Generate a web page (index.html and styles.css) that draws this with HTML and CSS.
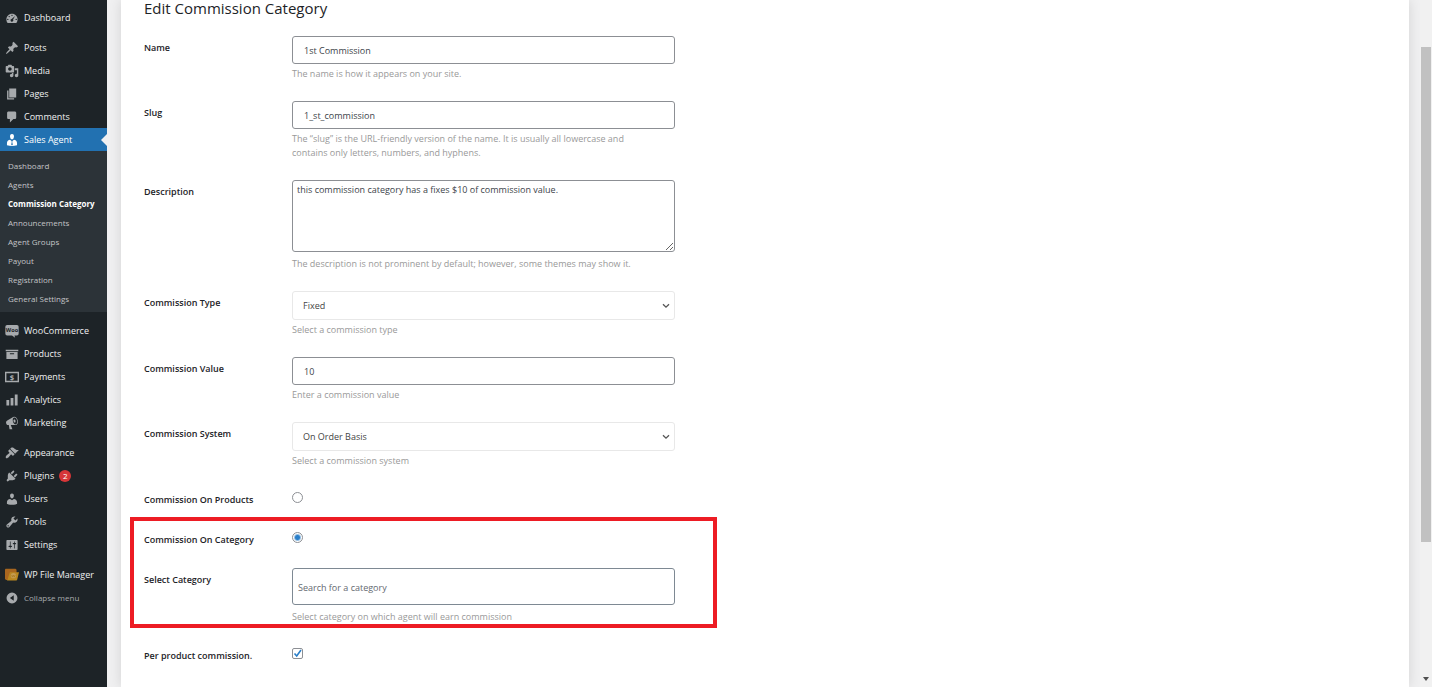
FILE: index.html
```html
<!DOCTYPE html>
<html lang="en-US">

<head>
    <meta charset="UTF-8">
    <meta name="viewport" content="width=device-width, initial-scale=1.0">
    <title>Edit Commission Category</title>
    <link rel="stylesheet" href="styles.css">
</head>

<body>
    <div class="wrap">
        <!-- Admin menu -->
        <nav class="admin-menu">
            <ul class="menu">
                <li><a href="#"><svg class="icon" viewBox="0 0 20 20"><path fill-rule="evenodd" d="M3.76 17h12.48A7.94 7.94 0 0 0 18 12c0-4.41-3.58-8-8-8s-8 3.59-8 8c0 1.91.67 3.65 1.76 5zM10 5.2a1 1 0 1 1 0 2 1 1 0 0 1 0-2zM6 7a1 1 0 1 1 0 2 1 1 0 0 1 0-2zm8.400 0L11.600 12.200A2 2 0 1 1 9.500 11.300zM4 11a1 1 0 1 1 0 2 1 1 0 0 1 0-2zm12 0a1 1 0 1 1 0 2 1 1 0 0 1 0-2z"/></svg>Dashboard</a></li>
            </ul>
            <ul class="menu">
                <li><a href="#"><svg class="icon" viewBox="0 0 20 20"><path d="M10.440 3.020l1.820-1.820 6.360 6.350-1.830 1.820c-1.050-.68-2.480-.57-3.410.36l-.75.75c-.92.93-1.040 2.350-.35 3.410l-1.830 1.820-2.410-2.410-2.800 2.790c-.42.42-3.380 2.710-3.800 2.290s1.860-3.390 2.280-3.810l2.790-2.790L4.100 9.360l1.830-1.820c1.050.69 2.480.57 3.400-.36l.75-.75c.93-.92 1.050-2.350.36-3.410z"/></svg>Posts</a></li>
                <li><a href="#"><svg class="icon" viewBox="0 0 20 20"><path fill-rule="evenodd" d="M13 11V4c0-.55-.45-1-1-1h-1.670L9 1H5L3.670 3H2c-.55 0-1 .45-1 1v7c0 .55.45 1 1 1h10c.55 0 1-.45 1-1zM7 4.500c1.380 0 2.500 1.120 2.500 2.500S8.380 9.500 7 9.500 4.500 8.380 4.500 7 5.620 4.500 7 4.500zM14 6h5v10.500c0 1.380-1.120 2.500-2.500 2.500S14 17.880 14 16.500s1.120-2.500 2.500-2.500c.17 0 .34.02.5.05V9h-3V6zm-4 8.050V13h2v3.500c0 1.380-1.120 2.500-2.500 2.500S7 17.880 7 16.500 8.120 14 9.500 14c.17 0 .34.02.5.05z"/></svg>Media</a></li>
                <li><a href="#"><svg class="icon" viewBox="0 0 20 20"><path d="M6 15V2h10v13H6zm-1 1h8v2H3V5h2v11z"/></svg>Pages</a></li>
                <li><a href="#"><svg class="icon" viewBox="0 0 20 20"><path d="M5 2h9c1.100 0 2 .9 2 2v7c0 1.100-.9 2-2 2h-2l-5 5v-5H5c-1.100 0-2-.9-2-2V4c0-1.100.9-2 2-2z"/></svg>Comments</a></li>
                <li class="current">
                    <a href="#"><svg class="icon" viewBox="0 0 20 20"><path fill-rule="evenodd" d="M10 1.500c2.200 0 3 1.900 2.800 3.700C12.500 7.500 11.600 9 10 9S7.500 7.500 7.200 5.200C7 3.400 7.800 1.500 10 1.500zM7.300 9.800 10 12l2.700-2.200c2.500.2 4.500 2.400 4.500 4.600V17.500c-4.700 1.200-9.700 1.200-14.400 0V14.400c0-2.200 2-4.400 4.500-4.600zM9.300 12.300l.3 1.200-.8 3 1.200 1.300 1.200-1.300-.8-3 .3-1.200z"/></svg>Sales Agent</a>
                    <ul class="submenu">
                        <li><a href="#">Dashboard</a></li>
                        <li><a href="#">Agents</a></li>
                        <li><a href="#" class="active">Commission Category</a></li>
                        <li><a href="#">Announcements</a></li>
                        <li><a href="#">Agent Groups</a></li>
                        <li><a href="#">Payout</a></li>
                        <li><a href="#">Registration</a></li>
                        <li><a href="#">General Settings</a></li>
                    </ul>
                </li>
            </ul>
            <ul class="menu">
                <li><a href="#"><svg class="icon" viewBox="0 0 20 20"><path d="M3 1.500h14a2.500 2.500 0 0 1 2.500 2.500v10a2.500 2.500 0 0 1-2.500 2.500h-3.500l1 3-4.500-3H3A2.500 2.500 0 0 1 .5 14V4A2.500 2.500 0 0 1 3 1.500z"/><text class="woo-text" x="10" y="12">Woo</text></svg>WooCommerce</a></li>
                <li><a href="#"><svg class="icon" viewBox="0 0 20 20"><path fill-rule="evenodd" d="M19 4v2H1V4h18zM2 7h16v10H2V7zm11 3.500V9H7v1.500h6z"/></svg>Products</a></li>
                <li><a href="#"><svg class="icon" viewBox="0 0 20 20"><path fill-rule="evenodd" d="M0 2.500h20v15H0zM2 4.500v11h16v-11z"/><text class="pay-text" x="10" y="14">$</text></svg>Payments</a></li>
                <li><a href="#"><svg class="icon" viewBox="0 0 20 20"><path d="M18 18V2h-4v16h4zm-6 0V7H8v11h4zm-6 0v-8H2v8h4z"/></svg>Analytics</a></li>
                <li><a href="#"><svg class="icon" viewBox="0 0 20 20"><path fill-rule="evenodd" d="M18.150 5.940c.46 1.620.38 3.220-.02 4.480-.42 1.280-1.260 2.180-2.300 2.480-.16.06-.26.06-.4.06-.06.02-.12.02-.18.02-.06.02-.14.02-.22.02h-6.800l2.220 5.500c.02.14-.06.26-.14.34-.08.1-.24.16-.34.16H6.950c-.1 0-.26-.06-.34-.16-.08-.08-.16-.2-.14-.34l-1-5.500H4.250l-.02-.02c-.5.06-1.080-.18-1.540-.62s-.88-1.080-1.060-1.880c-.24-.8-.2-1.560-.02-2.200.18-.62.58-1.080 1.060-1.300l.02-.02 9-5.400c.1-.06.18-.1.24-.16.06-.04.14-.08.24-.12.16-.08.28-.12.5-.18 1.040-.3 2.240.1 3.220.98s1.840 2.240 2.260 3.860zm-2.580 5.980h-.02c.4-.1.74-.34 1.040-.7.58-.7.86-1.760.86-3.040 0-.64-.1-1.300-.28-1.980-.34-1.360-1.020-2.500-1.780-3.240s-1.680-1.100-2.460-.88c-.82.22-1.400.96-1.700 2-.32 1.040-.28 2.360.06 3.720.38 1.360 1 2.500 1.800 3.240.78.74 1.620 1.100 2.480.88zm-2.540-7.080c.22-.04.42-.02.62.04.38.16.76.48 1.020 1s.42 1.200.42 1.780c0 .3-.04.56-.12.8-.18.48-.44.84-.86.94-.34.1-.8-.06-1.140-.4s-.64-.86-.78-1.500c-.18-.62-.12-1.240.02-1.720s.48-.84.82-.94z"/></svg>Marketing</a></li>
            </ul>
            <ul class="menu">
                <li><a href="#"><svg class="icon" viewBox="0 0 20 20"><path d="M14.480 11.060L7.410 3.990l1.500-1.500c.5-.56 2.300-.47 3.510.32 1.210.8 1.430 1.280 2.910 2.100 1.180.64 2.450 1.260 4.450.85zm-.71.71L6.700 4.700 4.930 6.470c-.39.39-.39 1.020 0 1.410l1.060 1.060c.39.39.39 1.030 0 1.420-.6.6-1.430 1.110-2.210 1.690-.35.26-.7.53-1.010.84C1.430 14.230.4 16.080 1.400 17.070c.99 1 2.840-.03 4.180-1.360.31-.31.58-.66.85-1.020.57-.78 1.080-1.610 1.690-2.210.39-.39 1.020-.39 1.410 0l1.060 1.060c.39.39 1.020.39 1.410 0z"/></svg>Appearance</a></li>
                <li><a href="#"><svg class="icon" viewBox="0 0 20 20"><path d="M13.110 4.360L9.870 7.600 8 5.730l3.240-3.240c.35-.34 1.050-.2 1.560.32.52.51.66 1.210.31 1.550zm-8 1.770l.91-1.120 9.010 9.010-1.190.84c-.71.71-2.630 1.160-3.820 1.160H6.140L4.900 17.260c-.59.59-1.540.59-2.120 0-.59-.58-.59-1.530 0-2.120l1.240-1.240v-3.880c0-1.130.4-3.190 1.090-3.890zm7.260 3.970l3.240-3.240c.34-.35 1.040-.21 1.550.31.52.51.66 1.210.31 1.550l-3.240 3.250z"/></svg>Plugins<span class="count">2</span></a></li>
                <li><a href="#"><svg class="icon" viewBox="0 0 20 20"><path d="M10 9.250c-2.270 0-2.730-3.440-2.730-3.440C7 4.020 7.820 2 9.970 2c2.160 0 2.980 2.020 2.710 3.810 0 0-.41 3.440-2.680 3.440zm0 2.570L12.720 10c2.390 0 4.520 2.330 4.520 4.530v2.490s-3.650 1.130-7.240 1.130c-3.650 0-7.240-1.130-7.240-1.130v-2.490c0-2.250 1.940-4.480 4.470-4.480z"/></svg>Users</a></li>
                <li><a href="#"><svg class="icon" viewBox="0 0 20 20"><path fill-rule="evenodd" d="M16.680 9.770c-1.340 1.340-3.300 1.670-4.950.99l-5.410 6.520c-.99.99-2.590.99-3.580 0s-.99-2.590 0-3.570l6.520-5.420c-.68-1.650-.35-3.610.99-4.950 1.280-1.280 3.120-1.620 4.720-1.060l-2.890 2.890 2.820 2.820 2.860-2.870c.53 1.580.18 3.390-1.080 4.650zM3.810 16.210c.4.39 1.040.39 1.430 0 .4-.4.4-1.040 0-1.430-.39-.4-1.030-.4-1.430 0-.39.39-.39 1.030 0 1.430z"/></svg>Tools</a></li>
                <li><a href="#"><svg class="icon" viewBox="0 0 20 20"><path fill-rule="evenodd" d="M18 16V4c0-.55-.45-1-1-1H3c-.55 0-1 .45-1 1v12c0 .55.45 1 1 1h14c.55 0 1-.45 1-1zM8 11h1c.55 0 1 .45 1 1s-.45 1-1 1H8v1.500c0 .28-.22.5-.5.5s-.5-.22-.5-.5V13H6c-.55 0-1-.45-1-1s.45-1 1-1h1V5.500c0-.28.22-.5.5-.5s.5.22.5.5V11zm5-2h-1c-.55 0-1-.45-1-1s.45-1 1-1h1V5.500c0-.28.22-.5.5-.5s.5.22.5.5V7h1c.55 0 1 .45 1 1s-.45 1-1 1h-1v5.500c0 .28-.22.5-.5.5s-.5-.22-.5-.5V9z"/></svg>Settings</a></li>
            </ul>
            <ul class="menu">
                <li><a href="#"><svg class="icon" viewBox="0 0 20 20"><path fill="#a8661f" d="M0 2.500C0 1.700.7 1 1.500 1H15l1.500 1.500V17H2a2 2 0 0 1-2-2z"/><path fill="#b98720" d="M7 6h13l-2.500 10.500c-.2.800-.7 1.500-1.500 1.500H1.500C3.500 18 4 16 4.500 13.500z"/><circle cx="12" cy="11" r="3.800" fill="#c49b52"/><path fill="none" stroke="#a87a1c" d="M9.500 10l1.200 3 1.300-3 1.300 3 1.200-3"/></svg>WP File Manager</a></li>
                <li><a href="#" class="collapse"><svg class="icon" viewBox="0 0 20 20"><path fill-rule="evenodd" d="M10 2.200a7.800 7.800 0 1 1 0 15.600 7.800 7.800 0 0 1 0-15.600zM12.500 6L7 10l5.500 4z"/></svg>Collapse menu</a></li>
            </ul>
        </nav>

        <!-- Edit form -->
        <main class="content">
            <div class="panel">
                <h1>Edit Commission Category</h1>
                <form class="form">
                    <div class="row">
                        <label for="name">Name</label>
                        <div class="field">
                            <input type="text" class="control" id="name" value="1st Commission">
                            <p class="description">The name is how it appears on your site.</p>
                        </div>
                    </div>
                    <div class="row">
                        <label for="slug">Slug</label>
                        <div class="field">
                            <input type="text" class="control" id="slug" value="1_st_commission">
                            <p class="description">The “slug” is the URL-friendly version of the name. It is usually all lowercase and contains only letters, numbers, and hyphens.</p>
                        </div>
                    </div>
                    <div class="row">
                        <label for="desc">Description</label>
                        <div class="field tall">
                            <textarea class="control" id="desc">this commission category has a fixes $10 of commission value.</textarea>
                            <p class="description">The description is not prominent by default; however, some themes may show it.</p>
                        </div>
                    </div>
                    <div class="row">
                        <label for="type">Commission Type</label>
                        <div class="field">
                            <div class="select">
                                <select class="control" id="type"><option>Fixed</option></select>
                                <svg class="arrow" viewBox="0 0 8 6"><path d="M1 1.200l3 3 3-3"/></svg>
                            </div>
                            <p class="description">Select a commission type</p>
                        </div>
                    </div>
                    <div class="row">
                        <label for="value">Commission Value</label>
                        <div class="field">
                            <input type="text" class="control" id="value" value="10">
                            <p class="description">Enter a commission value</p>
                        </div>
                    </div>
                    <div class="row">
                        <label for="system">Commission System</label>
                        <div class="field">
                            <div class="select">
                                <select class="control" id="system"><option>On Order Basis</option></select>
                                <svg class="arrow" viewBox="0 0 8 6"><path d="M1 1.200l3 3 3-3"/></svg>
                            </div>
                            <p class="description">Select a commission system</p>
                        </div>
                    </div>
                    <div class="row">
                        <label for="on-products">Commission On Products</label>
                        <div class="field check">
                            <input type="radio" name="commission_on" id="on-products">
                        </div>
                    </div>
                    <div class="highlight">
                        <div class="row">
                            <label for="on-category">Commission On Category</label>
                            <div class="field check">
                                <input type="radio" name="commission_on" id="on-category" checked>
                            </div>
                        </div>
                        <div class="row">
                            <label for="category">Select Category</label>
                            <div class="field tall">
                                <input type="text" class="control search" id="category" placeholder="Search for a category">
                                <p class="description">Select category on which agent will earn commission</p>
                            </div>
                        </div>
                    </div>
                    <div class="row">
                        <label for="per-product">Per product commission.</label>
                        <div class="field check">
                            <span class="tick-box">
                                <input type="checkbox" id="per-product" checked>
                                <svg class="tick" viewBox="0 0 11 11"><path d="M2.500 5.500l2.200 2.500 4.300-6"/></svg>
                            </span>
                        </div>
                    </div>
                </form>
            </div>
        </main>

        <!-- Scroll track -->
        <div class="scrollbar">
            <div class="thumb"></div>
            <svg class="scroll-down" viewBox="0 0 6 4"><path d="M0 0h6L3 4z"/></svg>
        </div>
    </div>
</body>

</html>
```
FILE: styles.css
```css
:root {
    --menu-bg: #1d2327;
    --submenu-bg: #2c3338;
    --blue: #2271b1;
    --page-bg: #f0f0f1;
    --text: #1d2327;
    --muted: #999;
    --border: #8c8f94;
}

* {
    box-sizing: border-box;
}

body {
    margin: 0;
    background: var(--page-bg);
    color: var(--text);
    font-family: "Open Sans", "Noto Sans", sans-serif;
    font-size: 9px;
    line-height: 14px;
}

.wrap {
    display: flex;
    height: 100vh;
    overflow: hidden;
}

/* Admin menu */
.admin-menu {
    flex: 0 0 107px;
    padding-top: 6px;
    background: var(--menu-bg);
}

.admin-menu ul {
    margin: 0;
    padding: 0;
    list-style: none;
}

.menu + .menu {
    padding-top: 7px;
}

.menu a {
    display: flex;
    align-items: center;
    height: 23px;
    padding-left: 5px;
    color: #f0f0f1;
    font-size: 9px;
    text-decoration: none;
    white-space: nowrap;
}

.icon {
    width: 14px;
    height: 14px;
    margin-right: 5px;
    fill: #a7aaad;
}

.woo-text,
.pay-text {
    font-family: "Open Sans", sans-serif;
    font-weight: 700;
    text-anchor: middle;
}

.woo-text {
    fill: var(--menu-bg);
    font-size: 8px;
}

.pay-text {
    font-size: 11px;
}

.menu .current > a {
    position: relative;
    background: var(--blue);
    color: #fff;
}

.current > a::after {
    content: "";
    position: absolute;
    right: 0;
    border: 6px solid transparent;
    border-right-color: var(--page-bg);
    border-left-width: 0;
}

.current .icon {
    fill: #fff;
}

.admin-menu .submenu {
    padding: 5px 0 4px;
    background: var(--submenu-bg);
}

.submenu a {
    height: 19px;
    padding-left: 8px;
    color: #c3c4c7;
    font-size: 8px;
}

.submenu .active {
    color: #fff;
    font-weight: 700;
}

.count {
    width: 12px;
    height: 12px;
    margin-left: 5px;
    border-radius: 50%;
    background: #d63638;
    color: #fff;
    font-size: 8px;
    line-height: 12px;
    text-align: center;
}

.menu .collapse {
    color: #a7aaad;
    font-size: 8px;
}

/* Edit form */
.content {
    flex: 1;
    padding: 0 11px 0 14px;
}

.panel {
    min-height: 100vh;
    padding: 0 23px;
    background: #fff;
    box-shadow: 0 0 12px rgba(0, 0, 0, 0.12);
}

h1 {
    margin: 0 0 10px;
    font-size: 15px;
    font-weight: 400;
    line-height: 16px;
}

.form {
    max-width: 573px;
}

.row {
    display: flex;
    padding: 10px 0;
}

.row > label {
    flex: 0 0 148px;
    padding-top: 5px;
    font-weight: 600;
}

.field {
    flex: 0 1 383px;
}

.check {
    height: 20px;
    padding-top: 4px;
}

.control {
    display: block;
    width: 100%;
    height: 28px;
    margin: 0;
    padding: 1px 11px 0;
    border: 1px solid var(--border);
    border-radius: 3px;
    background: #fff;
    color: #3c434a;
    font: inherit;
}

textarea.control {
    height: 72px;
    padding: 2px 4px;
}

.search.control {
    height: 37px;
    padding: 2px 5px 0;
    border-color: #7e8993;
}

.search::placeholder {
    color: #646970;
}

.select {
    position: relative;
}

select.control {
    height: 29px;
    padding: 0 10px;
    border-color: #e8e8e8;
    font-weight: 500;
    color: #444;
    appearance: none;
}

.arrow {
    position: absolute;
    top: 12px;
    right: 5px;
    width: 8px;
    height: 6px;
    fill: none;
    stroke: #555;
    stroke-width: 1.3;
}

.description {
    max-width: 350px;
    margin: 3px 0 0;
    color: var(--muted);
}

.tall .description {
    margin-top: 5px;
}

input[type="radio"],
input[type="checkbox"] {
    display: block;
    width: 11px;
    height: 11px;
    margin: 0;
    border: 1px solid var(--border);
    border-radius: 50%;
    background: #fff;
    appearance: none;
}

input[type="radio"]:checked {
    background: radial-gradient(circle, #2a7fc9 0 2px, #fff 4px);
}

input[type="checkbox"] {
    border-radius: 2px;
}

.tick-box {
    display: block;
    position: relative;
    width: 11px;
}

.tick {
    position: absolute;
    inset: 0;
    fill: none;
    stroke: #2a7fc9;
    stroke-width: 1.6;
    pointer-events: none;
}

/* Red frame around the category rows */
.highlight {
    position: relative;
}

.highlight::after {
    content: "";
    position: absolute;
    inset: -1px 0 6px -14px;
    border: 4px solid #ed1c24;
    pointer-events: none;
}

/* Scroll track */
.scrollbar {
    display: flex;
    flex: 0 0 12px;
    flex-direction: column;
    align-items: center;
    justify-content: space-between;
    padding: 47px 0 6px;
    background: #f1f1f1;
}

.thumb {
    width: 10px;
    height: 78%;
    background: #c1c1c1;
}

.scroll-down {
    width: 6px;
    height: 4px;
    fill: #505050;
}
```
